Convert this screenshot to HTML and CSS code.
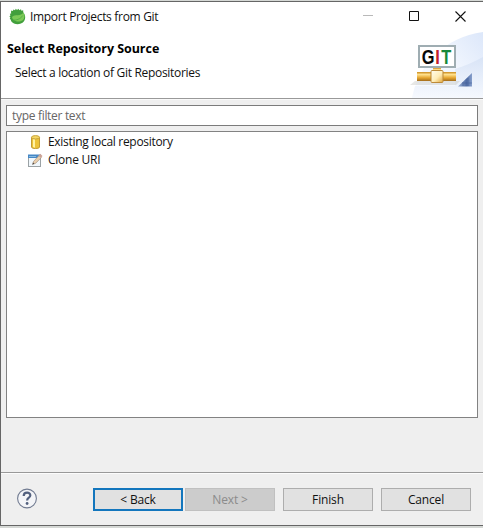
FILE: index.html
```html
<!DOCTYPE html>
<html lang="en">
<head>
<meta charset="utf-8">
<title>Import Projects from Git</title>
<link rel="stylesheet" href="styles.css">
</head>
<body>
<main class="window">
  <div class="titlebar">
    <svg class="app-icon" width="17" height="17" viewBox="0 0 17 17">
      <path d="M2 4L2.3 2.5L4 3L4.3 1.4L6 2.3L6.8 .8L8 2L9.5 .8L10.2 2.2L12 1.3L12.4 2.8L14.2 2.3L14.2 4.2C17.5 8 16.3 12.5 13.5 14.8C10 17.2 4.5 16.4 2.2 13.2L1.7 11.5L.7 11L1.4 9.5L.4 8.5L1.5 7.3L.8 5.8L2.2 5.4Z" fill="#429f3c"/>
      <path d="M3 9C5.5 6 12 8.5 14.5 4.5C16.5 8.5 15.2 12.5 11.5 13.3C7.5 14 3.5 12.5 3 9Z" fill="#7cc957"/>
      <path d="M3.5 12C7.5 12.5 11.5 11 13.8 7.5" fill="none" stroke="#4dab41" stroke-width=".8"/>
    </svg>
    <span class="title">Import Projects from Git</span>
    <div class="controls">
      <svg width="10" height="10" viewBox="0 0 10 10"><path d="M0 4.5H10" stroke="#b9b9b9"/></svg>
      <svg width="10" height="10" viewBox="0 0 10 10"><path d="M.5 .5H9.5V9.5H.5Z" fill="none" stroke="#111"/></svg>
      <svg width="11" height="11" viewBox="0 0 11 11"><path d="M.5 .5L10.5 10.5M10.5 .5L.5 10.5" stroke="#111" stroke-width="1.1"/></svg>
    </div>
  </div>
  <header class="banner">
    <div class="banner-text">
      <h1>Select Repository Source</h1>
      <p>Select a location of Git Repositories</p>
    </div>
    <svg class="banner-art" width="75" height="66" viewBox="0 0 75 66">
      <defs>
        <linearGradient id="sky" x1="0" y1=".8" x2="1" y2="0"><stop offset="0" stop-color="#f7faff"/><stop offset=".5" stop-color="#f1f6fe"/><stop offset="1" stop-color="#dce7fa"/></linearGradient>
        <linearGradient id="haze" x1="0" y1="0" x2="0" y2="1"><stop offset="0" stop-color="#d5e1f5"/><stop offset="1" stop-color="#f6f9fe"/></linearGradient>
        <linearGradient id="gold" x1="0" y1="0" x2="0" y2="1"><stop offset="0" stop-color="#c98a1c"/><stop offset=".28" stop-color="#ffe08c"/><stop offset=".65" stop-color="#e5a52e"/><stop offset="1" stop-color="#a36c1c"/></linearGradient>
        <linearGradient id="joint" x1="0" y1="0" x2="1" y2="1"><stop offset="0" stop-color="#fffdf0"/><stop offset=".55" stop-color="#ffedb8"/><stop offset="1" stop-color="#e0a63c"/></linearGradient>
        <linearGradient id="corner" x1="0" y1="0" x2="1" y2="0"><stop offset="0" stop-color="#9db1d3"/><stop offset=".6" stop-color="#506da5"/><stop offset="1" stop-color="#88a0cc"/></linearGradient>
      </defs>
      <path d="M4 66C10 34 36 5 75 0V66Z" fill="url(#sky)"/>
      <path d="M47 37C57 34 66 30 75 25V66H4L7 54H47Z" fill="url(#haze)" opacity=".8"/>
      <path d="M7 49H52L48 53H2Z" fill="#b9b9b4" opacity=".35"/>
      <rect x="11" y="14" width="36" height="21" fill="#fff" stroke="#9fadb2" stroke-width="2"/>
      <g class="git-logo" transform="scale(.82 1)"><text x="16.7" y="32" fill="#080808">G</text><text x="33.3" y="32" fill="#c3202d">I</text><text x="40.6" y="32" fill="#16883a">T</text></g>
      <rect x="25" y="36" width="8" height="5" fill="url(#gold)"/>
      <rect x="9" y="40" width="39" height="9" fill="url(#gold)"/>
      <rect x="23" y="38.5" width="12" height="12" rx="1" fill="url(#joint)" stroke="#bd8a38"/>
      <path d="M50 54.5L64 41V54.5Z" fill="url(#corner)"/>
      <path d="M55 50V54M60 46V54M54 51H64" stroke="#3f5b94" opacity=".5"/>
    </svg>
  </header>
  <section class="content">
    <input class="filter" type="text" placeholder="type filter text" aria-label="type filter text">
    <ul class="tree">
      <li>
        <svg width="16" height="16" viewBox="0 0 16 16">
          <path d="M4.5 3.5V13C4.5 15 12.5 15 12.5 13V3.5Z" fill="#edc339" stroke="#c29c36"/>
          <path d="M6 5V13L8 13.7V5Z" fill="#fff2a4"/>
          <ellipse cx="8.5" cy="3.3" rx="4" ry="1.7" fill="#f5d765" stroke="#c8a33c"/>
        </svg>
        <span class="existing">Existing local repository</span>
      </li>
      <li>
        <svg width="16" height="16" viewBox="0 0 16 16">
          <rect x="1.5" y="3.5" width="12" height="11" fill="#f0f7fc" stroke="#9ba2a5"/>
          <path d="M1 2.5H14V6H1Z" fill="#4587c5"/>
          <path d="M2 4.5H9" stroke="#88bae1"/>
          <path d="M5.5 12.5L6.5 9.5L12 3.5L14.4 5.5L8.7 11.2Z" fill="#e9ceac" stroke="#9b8775" stroke-width=".6"/>
          <path d="M11.5 3.5L13.2 1.8L15.5 3.9L14 5.7Z" fill="#cda397"/>
          <path d="M5.5 12.5L7.4 11.8L6 10.6Z" fill="#444"/>
        </svg>
        <span class="clone">Clone URI</span>
      </li>
    </ul>
  </section>
  <footer class="actions">
    <svg class="help" width="22" height="22" viewBox="0 0 22 22">
      <circle cx="11" cy="10.5" r="9.4" fill="#f4f5f8" stroke="#717b91" stroke-width="1.1"/>
      <path d="M7.7 7.9C7.8 3.5 14.5 3.7 14.3 7.5C14.2 9.9 11.1 9.6 11.1 12.5" fill="none" stroke="#53617f" stroke-width="2.2"/>
      <circle cx="11.1" cy="15.5" r="1.4" fill="#53617f"/>
    </svg>
    <button class="default">&lt; Back</button>
    <button class="next" disabled>Next &gt;</button>
    <button class="finish">Finish</button>
    <button>Cancel</button>
  </footer>
</main>
</body>
</html>
```
FILE: styles.css
```css
* { box-sizing: border-box; }
body {
  margin: 0;
  width: 483px;
  height: 528px;
  overflow: hidden;
  padding: 1px 0 2px;
  background: #d5d8d5;
  font: 12px/18px "Open Sans", "Noto Sans", sans-serif;
  color: #111;
}
.window {
  height: 525px;
  display: flex;
  flex-direction: column;
  background: #efefef;
  border: 1px solid #666;
  border-right: 0;
}
.titlebar {
  height: 30px;
  display: flex;
  align-items: center;
  padding-left: 8px;
  background: #fff;
}
.app-icon { margin-top: -2px; }
.title { margin-left: 4px; letter-spacing: -.31px; }
.controls { display: flex; align-items: center; gap: 36px; margin: -2px 0 0 auto; padding-right: 17px; }
.banner {
  height: 67px;
  display: flex;
  justify-content: space-between;
  background: #fff;
  border-bottom: 1px solid #999;
}
.banner-text { padding: 8px 0 0 6px; }
h1 { margin: 0; font-size: 12.5px; line-height: 18px; letter-spacing: -.05px; color: #000; }
p { margin: 6px 0 0 8px; line-height: 18px; letter-spacing: -.31px; }
.git-logo { font: bold 20px "Liberation Sans", sans-serif; }
.content { padding: 5px 5px 0; border-top: 1px solid #f9f9f9; height: 373px; }
.filter {
  display: block;
  width: 472px;
  height: 21px;
  padding: 0 5px;
  border: 1px solid #7b7b7b;
  border-radius: 0;
  background: #fff;
  font: inherit;
  letter-spacing: -.31px;
  outline: 0;
}
.filter::placeholder { color: #666; opacity: 1; }
.tree {
  width: 472px;
  height: 287px;
  margin: 5px 0 0;
  padding: 1px 0 0 20px;
  background: #fff;
  border: 1px solid #828282;
  list-style: none;
}
.tree li { display: flex; align-items: center; height: 18px; gap: 5px; }
.existing { letter-spacing: -.3px; }
.clone { letter-spacing: -.25px; }
.actions {
  flex: 1;
  display: flex;
  align-items: flex-start;
  border-top: 1px solid #999;
  box-shadow: inset 0 1px #fcfcfc;
  padding: 15px 0 0 15px;
}
.help { margin-right: 55px; }
button {
  width: 90px;
  height: 23px;
  padding: 0;
  border: 1px solid #adadad;
  border-radius: 0;
  background: #e1e1e1;
  color: #111;
  font: inherit;
  line-height: 19px;
  letter-spacing: -.15px;
}
.default { border: 2px solid #1376bd; }
.next { margin-left: 2px; background: #ccc; border-color: #c0c0c0; color: #8b8b8b; }
.finish { margin: 0 8px; }
```
